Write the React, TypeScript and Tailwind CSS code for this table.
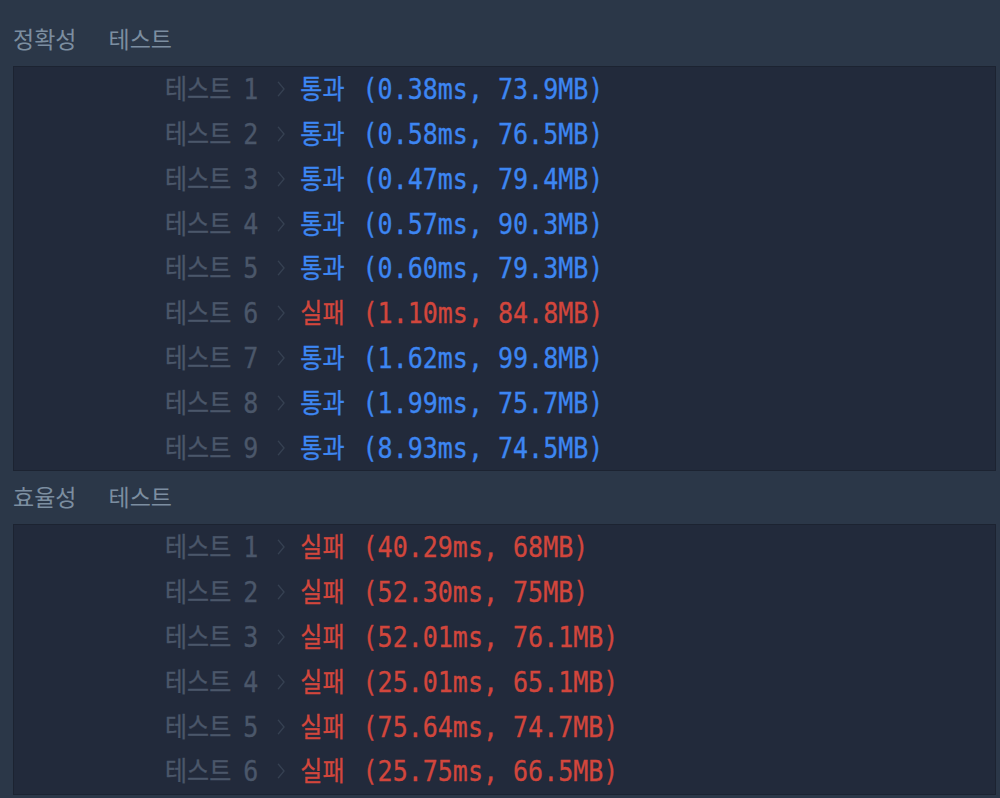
import * as React from "react";

type Row = { no: number; pass: boolean; time: string; mem: string };

const accuracy: Row[] = [
  { no: 1, pass: true, time: "0.38ms", mem: "73.9MB" },
  { no: 2, pass: true, time: "0.58ms", mem: "76.5MB" },
  { no: 3, pass: true, time: "0.47ms", mem: "79.4MB" },
  { no: 4, pass: true, time: "0.57ms", mem: "90.3MB" },
  { no: 5, pass: true, time: "0.60ms", mem: "79.3MB" },
  { no: 6, pass: false, time: "1.10ms", mem: "84.8MB" },
  { no: 7, pass: true, time: "1.62ms", mem: "99.8MB" },
  { no: 8, pass: true, time: "1.99ms", mem: "75.7MB" },
  { no: 9, pass: true, time: "8.93ms", mem: "74.5MB" },
];

const efficiency: Row[] = [
  { no: 1, pass: false, time: "40.29ms", mem: "68MB" },
  { no: 2, pass: false, time: "52.30ms", mem: "75MB" },
  { no: 3, pass: false, time: "52.01ms", mem: "76.1MB" },
  { no: 4, pass: false, time: "25.01ms", mem: "65.1MB" },
  { no: 5, pass: false, time: "75.64ms", mem: "74.7MB" },
  { no: 6, pass: false, time: "25.75ms", mem: "66.5MB" },
];

const ko = "font-['Noto_Sans_CJK_KR',sans-serif] text-[24px]";

function SectionTitle({ name }: { name: string }) {
  return (
    <div className="flex h-[53px] items-center pb-[3px] font-['Noto_Sans_CJK_KR',sans-serif] text-[23px] text-[#7c8ea0]">
      <span>{name}</span>
      <span className="ml-[32px]">테스트</span>
    </div>
  );
}

function ResultRow({ row }: { row: Row }) {
  return (
    <div className="flex h-[44.8px] items-center pl-[151px] font-['DejaVu_Sans_Mono','Noto_Sans_CJK_KR',monospace] text-[25px] whitespace-pre">
      <div className="flex scale-y-[1.12] items-center [-webkit-text-stroke:0.3px_currentcolor]">
        <span className="text-[#4b576a]">
          <span className={ko}>테스트</span>
          <span className="ml-[12px]">{row.no}</span>
        </span>
        <svg
          className="mr-[15px] ml-[19px] h-[14px] w-[8px]"
          viewBox="0 0 8 14"
          fill="none"
          stroke="#364152"
          strokeWidth="1.3"
        >
          <path d="M1 0.5 L7 7 L1 13.5" />
        </svg>
        <span className={row.pass ? "text-[#3d86f2]" : "text-[#d2463c]"}>
          <span className={ko}>{row.pass ? "통과" : "실패"}</span>
          <span className="ml-[3px]">{` (${row.time}, ${row.mem})`}</span>
        </span>
      </div>
    </div>
  );
}

function Panel({ rows }: { rows: Row[] }) {
  return (
    <div className="w-[983px] border border-[#1c2331] bg-[#222a3b]">
      {rows.map((r) => (
        <ResultRow key={r.no} row={r} />
      ))}
    </div>
  );
}

export default function App() {
  return (
    <div className="h-[798px] w-[1000px] overflow-hidden bg-[#2b3748] pt-[13px] pl-[13px]">
      <SectionTitle name="정확성" />
      <Panel rows={accuracy} />
      <SectionTitle name="효율성" />
      <Panel rows={efficiency} />
    </div>
  );
}
